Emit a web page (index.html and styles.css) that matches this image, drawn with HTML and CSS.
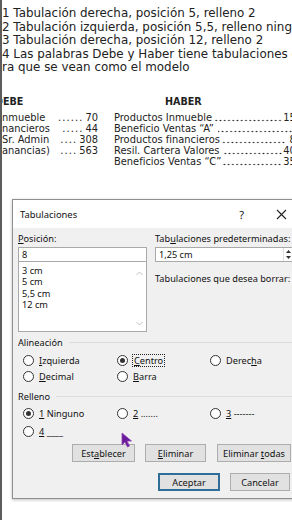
FILE: index.html
```html
<!DOCTYPE html>
<html lang="es">
<head>
<meta charset="utf-8">
<title>Tabulaciones</title>
<link rel="stylesheet" href="styles.css">
</head>
<body>
<div class="page">
  <div class="doc">
    <p>1 Tabulación derecha, posición 5, relleno 2</p>
    <p>2 Tabulación izquierda, posición 5,5, relleno ninguno</p>
    <p>3 Tabulación derecha, posición 12, relleno 2</p>
    <p>4 Las palabras Debe y Haber tiene tabulaciones diferentes</p>
    <p>ra que se vean como el modelo</p>
  </div>

  <div class="ledger">
    <div class="debe">
      <div class="lhead debe-head">DEBE</div>
      <div class="lrow"><span>nmueble</span><span class="amt"><span class="dots">......</span><span>70</span></span></div>
      <div class="lrow"><span>nancieros</span><span class="amt"><span class="dots">.....</span><span>44</span></span></div>
      <div class="lrow"><span>Sr. Admin</span><span class="amt"><span class="dots">....</span><span>308</span></span></div>
      <div class="lrow"><span>anancias)</span><span class="amt"><span class="dots">....</span><span>563</span></span></div>
    </div>
    <div class="haber">
      <div class="lhead haber-head">HABER</div>
      <div class="hrow"><span>Productos Inmueble</span><span class="lead"></span><span>150</span></div>
      <div class="hrow"><span>Beneficio Ventas “A”</span><span class="lead gap"></span></div>
      <div class="hrow"><span>Productos financieros</span><span class="lead"></span><span class="num">80</span></div>
      <div class="hrow"><span>Resil. Cartera Valores</span><span class="lead gap"></span><span>400</span></div>
      <div class="hrow"><span>Beneficios Ventas “C”</span><span class="lead"></span><span>350</span></div>
    </div>
  </div>

  <div class="dialog">
    <div class="titlebar">
      <span class="title">Tabulaciones</span>
      <span class="help">?</span>
      <span class="close">
        <svg width="11" height="11" viewBox="0 0 11 11"><path d="M1 1 L10 10 M10 1 L1 10" stroke="#222" stroke-width="1.1" fill="none"/></svg>
      </span>
    </div>
    <div class="dbody">
      <div class="topgrid">
        <div class="col">
          <div class="label"><u>P</u>osición:</div>
          <div class="field">8</div>
          <div class="listbox">
            <div class="items">
              <div>3 cm</div>
              <div>5 cm</div>
              <div>5,5 cm</div>
              <div>12 cm</div>
            </div>
            <div class="sbar">
              <svg width="7" height="5" viewBox="0 0 7 5"><path d="M0.5 4 L3.5 1 L6.5 4" stroke="#c2c2c2" stroke-width="1" fill="none"/></svg>
              <svg width="7" height="5" viewBox="0 0 7 5"><path d="M0.5 1 L3.5 4 L6.5 1" stroke="#c2c2c2" stroke-width="1" fill="none"/></svg>
            </div>
          </div>
        </div>
        <div class="col">
          <div class="label">Tab<u>u</u>laciones predeterminadas:</div>
          <div class="field spin-field">
            <span>1,25 cm</span>
            <span class="spin">
              <svg width="7" height="13" viewBox="0 0 7 13"><path d="M1 5 L3.5 2 L6 5 Z M1 8 L3.5 11 L6 8 Z" fill="#333"/></svg>
            </span>
          </div>
          <div class="label borrar">Tabulaciones que desea borrar:</div>
        </div>
      </div>

      <div class="group-head">Alineación</div>
      <div class="radios">
        <div class="opt"><span class="radio"></span><span><u>I</u>zquierda</span></div>
        <div class="opt"><span class="radio on"></span><span class="focus"><u>C</u>entro</span></div>
        <div class="opt"><span class="radio"></span><span>Derec<u>h</u>a</span></div>
        <div class="opt"><span class="radio"></span><span><u>D</u>ecimal</span></div>
        <div class="opt"><span class="radio"></span><span><u>B</u>arra</span></div>
      </div>

      <div class="group-head relleno">Relleno</div>
      <div class="radios fill">
        <div class="opt"><span class="radio on"></span><span><u>1</u> Ninguno</span></div>
        <div class="opt"><span class="radio"></span><span><u>2</u> .......</span></div>
        <div class="opt"><span class="radio"></span><span><u>3</u> -------</span></div>
        <div class="opt"><span class="radio"></span><span><u>4</u> ____</span></div>
      </div>

      <div class="btnrow first">
        <span class="btn w63"><span>Est<u>a</u>blecer</span></span>
        <span class="btn w61"><span><u>E</u>liminar</span></span>
        <span class="btn w74"><span>Eliminar <u>t</u>odas</span></span>
      </div>
      <div class="btnrow second">
        <span class="btn w62 default"><span>Aceptar</span></span>
        <span class="btn w60"><span>Cancelar</span></span>
      </div>
    </div>
  </div>
</div>

<svg class="cursor" width="12" height="16" viewBox="0 0 12 16">
  <path d="M1 1 L1 13 L4 10 L6.5 15 L8.5 14 L6 9 L10.5 9 Z" fill="#6a1b9a" stroke="#8e3fb5" stroke-width="0.8" stroke-linejoin="round"/>
</svg>
</body>
</html>
```

FILE: styles.css
```css
* {
  box-sizing: border-box;
  margin: 0;
  padding: 0;
}

html, body {
  width: 292px;
  height: 520px;
  overflow: hidden;
  background: #ffffff;
}

body {
  position: relative;
}

.page {
  width: 292px;
  height: 520px;
  overflow: hidden;
  border-left: 2px solid #5c5c5c;
}

/* document text */
.doc {
  font-family: "DejaVu Sans", Verdana, sans-serif;
  font-size: 11.9px;
  line-height: 13.5px;
  color: #222222;
  padding-top: 7px;
  white-space: nowrap;
}

.ledger {
  display: grid;
  grid-template-columns: 96px 1fr;
  column-gap: 16px;
  width: 300px;
  margin-top: 21.5px;
  font-family: "DejaVu Sans", Verdana, sans-serif;
  font-size: 9.9px;
  line-height: 11px;
  color: #222222;
  white-space: nowrap;
}

.debe, .haber {
  overflow: hidden;
}

.lhead {
  font-weight: bold;
  font-size: 9.6px;
  line-height: 12px;
  margin-bottom: 3.5px;
}

.debe-head {
  text-indent: -7px;
}

.haber-head {
  padding-left: 51px;
}

.lrow {
  display: flex;
  justify-content: space-between;
}

.amt {
  display: flex;
  gap: 2px;
}

.dots {
  letter-spacing: 1.1px;
}

.hrow {
  display: flex;
}

/* tab leader dots that fill the space up to the amount */
.lead {
  flex: 1;
  margin: 0 1px 0 1px;
  background-image: radial-gradient(circle, #2a2a2a 0, #2a2a2a 0.65px, rgba(255,255,255,0) 1.05px);
  background-size: 4.25px 3px;
  background-position: right 0 top 7px;
  background-repeat: repeat-x;
}

.lead.gap {
  margin-left: 4px;
}

.num {
  padding-left: 3px;
}

/* dialog */
.dialog {
  margin-top: 32.5px;
  margin-left: 10px;
  width: 292px;
  height: 300px;
  border: 1px solid #8f8f8f;
  background: #f0f0f0;
  font-family: "Noto Sans", "Open Sans", sans-serif;
  font-size: 9.2px;
  color: #111;
  box-shadow: 0 1px 3px rgba(0,0,0,0.25);
}

.titlebar {
  height: 28px;
  background: #ffffff;
  display: flex;
  align-items: center;
  padding-left: 7px;
  font-size: 9.4px;
}

.title {
  flex: 1;
}

.help {
  font-size: 11px;
  margin-right: 32px;
}

.close {
  display: flex;
  margin-right: 16px;
}

.dbody {
  padding: 3.5px 10px 0 5px;
}

.topgrid {
  display: grid;
  grid-template-columns: 129px 1fr;
  column-gap: 8px;
}

.label {
  line-height: 13px;
  margin-bottom: 2.5px;
  white-space: nowrap;
}

.field {
  height: 15px;
  background: #ffffff;
  border: 1px solid #a9a9a9;
  padding-left: 3px;
  line-height: 13px;
}

.spin-field {
  display: flex;
  justify-content: space-between;
}

.spin {
  display: flex;
  align-items: center;
  width: 9px;
  border-left: 1px solid #e0e0e0;
  justify-content: center;
}

.listbox {
  height: 70px;
  background: #ffffff;
  border: 1px solid #a9a9a9;
  border-top: none;
  display: flex;
}

.items {
  flex: 1;
  padding: 3px 0 0 3px;
  line-height: 11.3px;
}

.sbar {
  width: 14px;
  display: flex;
  flex-direction: column;
  align-items: center;
  justify-content: space-between;
  padding: 9px 0 5px;
}

.borrar {
  margin-top: 9.5px;
}

.group-head {
  display: flex;
  align-items: center;
  gap: 6px;
  line-height: 13px;
  margin-top: 3.5px;
}

.group-head::after {
  content: "";
  flex: 1;
  border-top: 1px solid #dcdcdc;
}

.group-head.relleno {
  margin-top: 5.5px;
}

.radios {
  display: grid;
  grid-template-columns: 94px 93px 1fr;
  grid-auto-rows: 16px;
  padding-left: 5px;
  margin-top: 3.5px;
}

.radios.fill {
  margin-top: 2.5px;
  row-gap: 2px;
}

.opt {
  display: flex;
  align-items: center;
  gap: 5px;
  white-space: nowrap;
}

.radio {
  width: 11px;
  height: 11px;
  border-radius: 50%;
  border: 1px solid #333333;
  background: #ffffff;
  display: flex;
  align-items: center;
  justify-content: center;
  flex: none;
}

.radio.on::after {
  content: "";
  width: 5px;
  height: 5px;
  border-radius: 50%;
  background: #333333;
}

.focus {
  outline: 1px dotted #222;
  padding: 0 1px;
  line-height: 11px;
}

.btnrow {
  display: flex;
  gap: 10px;
}

.btnrow.first {
  margin-top: 5px;
  margin-left: 54px;
}

.btnrow.first .w61 {
  margin-right: 1px;
}

.btnrow.second {
  margin-top: 11px;
  margin-left: 140px;
}

.btn {
  height: 18px;
  background: #e1e1e1;
  border: 1px solid #adadad;
  display: flex;
  align-items: center;
  justify-content: center;
  white-space: nowrap;
}

.btn.default {
  border: 2px solid #2f6f97;
}

.w60 { width: 60px; }
.w61 { width: 61px; }
.w62 { width: 62px; }
.w63 { width: 63px; }
.w74 { width: 74px; }

.cursor {
  position: absolute;
  left: 121px;
  top: 432px;
}
```
